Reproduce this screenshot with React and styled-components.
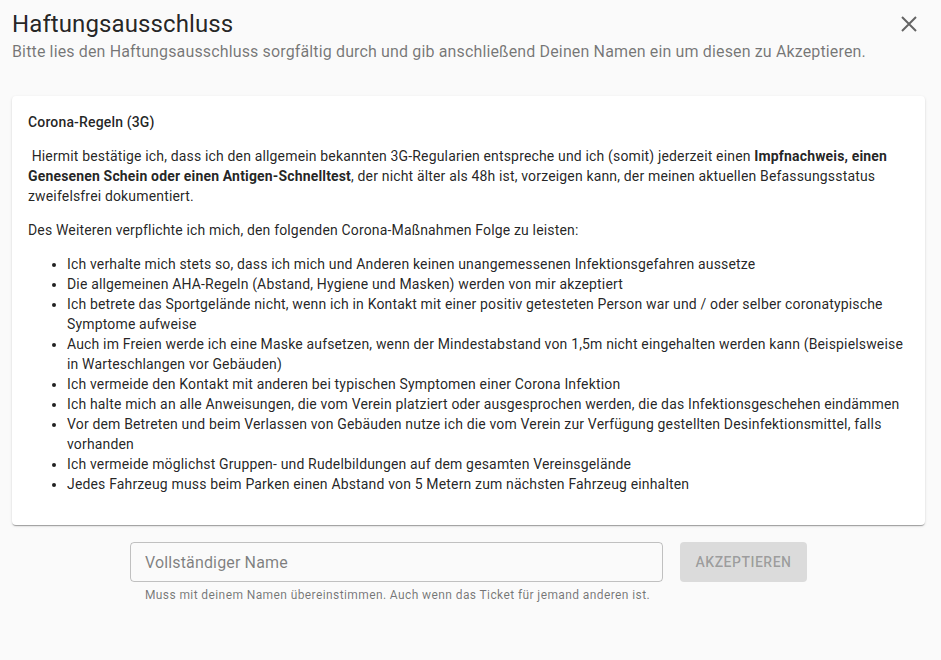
import React from 'react';
import styled, { createGlobalStyle } from 'styled-components';

const GlobalStyle = createGlobalStyle`
    body {
        margin: 0;
        background: #fafafa;
        font-family: Roboto, "Noto Sans", sans-serif;
        color: rgba(0, 0, 0, 0.87);
    }
`;

const Page = styled.div`
    padding: 8px 16px 0 12px;
    height: 652px;
`;

const Header = styled.div`
    display: flex;
    justify-content: space-between;
    align-items: flex-start;
`;

const Title = styled.h1`
    margin: 0;
    font-size: 24px;
    font-weight: 400;
    line-height: 32px;
    letter-spacing: 0.1px;
    color: rgba(0, 0, 0, 0.87);
`;

const Subtitle = styled.p`
    margin: 2px 0 0;
    font-size: 16px;
    line-height: 20px;
    letter-spacing: 0.14px;
    color: rgba(0, 0, 0, 0.54);
`;

const CloseButton = styled.button`
    border: 0;
    background: none;
    padding: 0;
    margin: 6px 6px 0 0;
    width: 20px;
    height: 20px;
    color: rgba(0, 0, 0, 0.6);
    cursor: pointer;
`;

const Card = styled.div`
    margin-top: 34px;
    background: #fff;
    border-radius: 4px;
    box-shadow: 0 2px 1px -1px rgba(0,0,0,0.2), 0 1px 1px 0 rgba(0,0,0,0.14), 0 1px 3px 0 rgba(0,0,0,0.12);
    padding: 16px 16px 17px;
    font-size: 14px;
    line-height: 20px;
    letter-spacing: 0.16px;
    color: rgba(0, 0, 0, 0.87);
`;

const Para = styled.p`
    margin: 0 0 14px;
    font-weight: ${props => props.bold ? 500 : 400};
`;

const List = styled.ul`
    margin: 0 0 14px;
    padding-left: 39px;
`;

const Form = styled.div`
    display: flex;
    justify-content: center;
    gap: 16px;
    margin-top: 17px;
`;

const Field = styled.div`
    display: flex;
    flex-direction: column;
`;

const Input = styled.input`
    box-sizing: border-box;
    width: 533px;
    height: 40px;
    border: 1px solid rgba(0, 0, 0, 0.23);
    border-radius: 4px;
    padding: 0 14px;
    font-family: Roboto, sans-serif;
    font-size: 16px;
    background: transparent;
    outline: none;
    &::placeholder {
        color: rgba(0, 0, 0, 0.5);
        letter-spacing: 0.15px;
    }
`;

const Helper = styled.span`
    margin: 5px 14px 0 15px;
    font-size: 12px;
    line-height: 16px;
    color: rgba(0, 0, 0, 0.54);
    letter-spacing: 0.4px;
`;

const Button = styled.button`
    box-sizing: border-box;
    width: 127px;
    height: 40px;
    border: 0;
    border-radius: 4px;
    background: rgba(0, 0, 0, 0.12);
    color: rgba(0, 0, 0, 0.3);
    font-family: Roboto, sans-serif;
    font-size: 14px;
    font-weight: 500;
    letter-spacing: 0.5px;
    text-transform: uppercase;
`;

const rules = [
    'Ich verhalte mich stets so, dass ich mich und Anderen keinen unangemessenen Infektionsgefahren aussetze',
    'Die allgemeinen AHA-Regeln (Abstand, Hygiene und Masken) werden von mir akzeptiert',
    'Ich betrete das Sportgelände nicht, wenn ich in Kontakt mit einer positiv getesteten Person war und / oder selber coronatypische Symptome aufweise',
    'Auch im Freien werde ich eine Maske aufsetzen, wenn der Mindestabstand von 1,5m nicht eingehalten werden kann (Beispielsweise in Warteschlangen vor Gebäuden)',
    'Ich vermeide den Kontakt mit anderen bei typischen Symptomen einer Corona Infektion',
    'Ich halte mich an alle Anweisungen, die vom Verein platziert oder ausgesprochen werden, die das Infektionsgeschehen eindämmen',
    'Vor dem Betreten und beim Verlassen von Gebäuden nutze ich die vom Verein zur Verfügung gestellten Desinfektionsmittel, falls vorhanden',
    'Ich vermeide möglichst Gruppen- und Rudelbildungen auf dem gesamten Vereinsgelände',
    'Jedes Fahrzeug muss beim Parken einen Abstand von 5 Metern zum nächsten Fahrzeug einhalten'
];

export default function App() {
    return (
        <Page>
            <GlobalStyle />
            <Header>
                <div>
                    <Title>Haftungsausschluss</Title>
                    <Subtitle>Bitte lies den Haftungsausschluss sorgfältig durch und gib anschließend Deinen Namen ein um diesen zu Akzeptieren.</Subtitle>
                </div>
                <CloseButton aria-label="close">
                    <svg width="20" height="20" viewBox="0 0 20 20">
                        <path d="M3 3 L17 17 M17 3 L3 17" stroke="currentColor" strokeWidth="2" />
                    </svg>
                </CloseButton>
            </Header>

            <Card>
                <Para bold>Corona-Regeln (3G)</Para>
                <Para>
                    &nbsp;Hiermit bestätige ich, dass ich den allgemein bekannten 3G-Regularien entspreche und ich (somit) jederzeit einen <b>Impfnachweis, einen Genesenen Schein oder einen Antigen-Schnelltest</b>, der nicht älter als 48h ist, vorzeigen kann, der meinen aktuellen Befassungsstatus zweifelsfrei dokumentiert.
                </Para>
                <Para>Des Weiteren verpflichte ich mich, den folgenden Corona-Maßnahmen Folge zu leisten:</Para>
                <List>
                    {rules.map(r => <li key={r}>{r}</li>)}
                </List>
            </Card>

            <Form>
                <Field>
                    <Input placeholder="Vollständiger Name" />
                    <Helper>Muss mit deinem Namen übereinstimmen. Auch wenn das Ticket für jemand anderen ist.</Helper>
                </Field>
                <Button disabled>Akzeptieren</Button>
            </Form>
        </Page>
    );
}
